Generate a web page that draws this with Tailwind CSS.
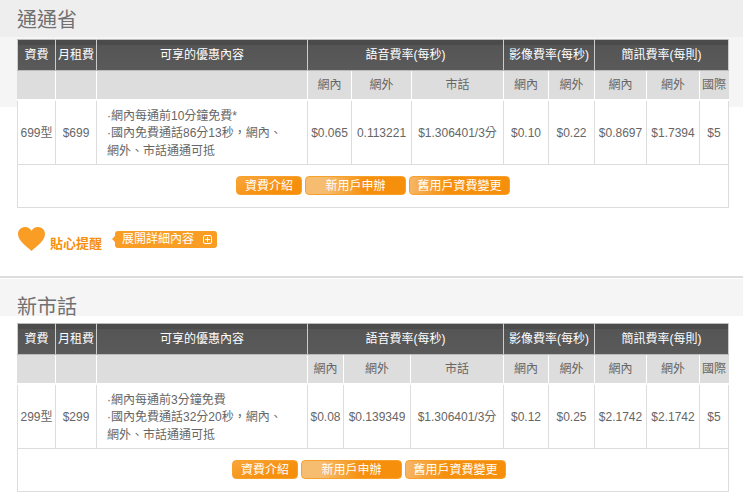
<!doctype html>
<html lang="zh-Hant">
    <head>
        <meta charset="UTF-8">
        <script src="https://cdn.jsdelivr.net/npm/@tailwindcss/browser@4"></script>
        <title>費率</title>
    </head>

    <body class="bg-white overflow-hidden font-['Liberation_Sans','Noto_Sans_CJK_TC',sans-serif] text-[12px] text-[#666]">

        <!-- 通通省 -->
        <section class="h-[276px] px-[17px] bg-[linear-gradient(#eeeeee_37px,#f5f5f5_37px,#f5f5f5_107px,#ffffff_107px)]">
            <h2 class="h-[39px] pt-[6px] text-[20px] leading-[28px] text-[#707070]">通通省</h2>

            <div class="w-[712px] border border-[#ddd] border-t-0">
                <table class="w-[711px] -ml-px table-fixed border-collapse text-center">
                    <colgroup>
                        <col class="w-[38px]"><col class="w-[41px]"><col class="w-[211px]"><col class="w-[44px]"><col class="w-[60px]"><col class="w-[92px]"><col class="w-[45px]"><col class="w-[46px]"><col class="w-[52px]"><col class="w-[53px]"><col class="w-[29px]">
                    </colgroup>
                    <tr class="h-[31px] text-white bg-[linear-gradient(#4b4b4b,#4b4b4b_5px,#555_5px,#5a5a5a)]">
                        <th class="font-normal border-t border-t-[#bbb] border-b border-b-[#bbb] border-r border-r-[#ccc] border-l border-l-[#ccc]">資費</th>
                        <th class="font-normal border-t border-t-[#bbb] border-b border-b-[#bbb] border-r border-r-[#ccc]">月租費</th>
                        <th class="font-normal border-t border-t-[#bbb] border-b border-b-[#bbb] border-r border-r-[#ccc]">可享的優惠內容</th>
                        <th colspan="3" class="font-normal border-t border-t-[#bbb] border-b border-b-[#bbb] border-r border-r-[#ccc]">語音費率(每秒)</th>
                        <th colspan="2" class="font-normal border-t border-t-[#bbb] border-b border-b-[#bbb] border-r border-r-[#ccc]">影像費率(每秒)</th>
                        <th colspan="3" class="font-normal border-t border-t-[#bbb] border-b border-b-[#bbb] border-r border-r-[#ccc]">簡訊費率(每則)</th>
                    </tr>
                    <tr class="h-[29px] bg-[#ddd] border-b-2 border-b-white">
                        <td class="border-r border-r-white"></td>
                        <td class="border-r border-r-white"></td>
                        <td class="border-r border-r-white"></td>
                        <td class="border-r border-r-white">網內</td>
                        <td class="border-r border-r-white">網外</td>
                        <td class="border-r border-r-white">市話</td>
                        <td class="border-r border-r-white">網內</td>
                        <td class="border-r border-r-white">網外</td>
                        <td class="border-r border-r-white">網內</td>
                        <td class="border-r border-r-white">網外</td>
                        <td class="border-r border-r-[#ddd]">國際</td>
                    </tr>
                    <tr class="h-[65px] border-b border-b-[#ddd] bg-white">
                        <td class="pt-px border-x border-x-[#ddd] whitespace-nowrap">699型</td>
                        <td class="pt-px border-r border-r-[#ddd]">$699</td>
                        <td class="pt-[3px] border-r border-r-[#ddd] pl-[10px] pr-[20px] text-left leading-[17.5px]">·網內每通前10分鐘免費*<br>·國內免費通話86分13秒，網內、網外、市話通通可抵</td>
                        <td class="pt-px border-r border-r-[#ddd]">$0.065</td>
                        <td class="pt-px border-r border-r-[#ddd]">0.113221</td>
                        <td class="pt-px border-r border-r-[#ddd] whitespace-nowrap">$1.306401/3分</td>
                        <td class="pt-px border-r border-r-[#ddd]">$0.10</td>
                        <td class="pt-px border-r border-r-[#ddd]">$0.22</td>
                        <td class="pt-px border-r border-r-[#ddd]">$0.8697</td>
                        <td class="pt-px border-r border-r-[#ddd]">$1.7394</td>
                        <td class="pt-px border-r border-r-[#ddd]">$5</td>
                    </tr>
                </table>
                <div class="h-[42px] pt-[11px] pl-[218px] flex gap-[3px] text-white text-center leading-[18px]">
                    <div class="w-[66px] h-[19px] rounded-[4px] border border-[#f7a02c] bg-[linear-gradient(160deg,#f9a63c,#f68f0c_70%)]">資費介紹</div>
                    <div class="w-[101px] h-[19px] rounded-[4px] border border-[#f7a02c] bg-[linear-gradient(90deg,#f6bd70_20%,#f68f0c_60%)]">新用戶申辦</div>
                    <div class="w-[101px] h-[19px] rounded-[4px] border border-[#f7a02c] bg-[linear-gradient(100deg,#f7b769,#f68f0c_40%)]">舊用戶資費變更</div>
                </div>
            </div>

            <div class="mt-[19px] flex items-start">
                <svg class="w-[27px] h-[24px] ml-px" viewBox="0 0 27 24"><path fill="#f99d25" d="M13.5 24C9 19.5 0 14 0 7 0 3 3 0 7 0c3 0 5.300 1.500 6.500 4C14.700 1.500 17 0 20 0c4 0 7 3 7 7 0 7-9 12.500-13.500 17z"/></svg>
                <span class="ml-[5px] mt-[9px] text-[13px] font-bold leading-[16px] text-[#f78f0f]">貼心提醒</span>
                <div class="relative ml-[13px] mt-[4px] w-[102px] h-[17px] rounded-[3px] bg-[#f99d25] text-white leading-[17px] pl-[7px]">
                    <span class="absolute -left-[3px] top-[5px] w-0 h-0 border-y-[3px] border-y-transparent border-r-[3px] border-r-[#f99d25]"></span>
                    展開詳細內容
                    <svg class="absolute right-[5px] top-[4px] w-[9px] h-[9px]" viewBox="0 0 9 9" fill="none" stroke="#fff"><rect x=".5" y=".5" width="8" height="8" rx="1.500"/><path d="M2 4.500h5M4.500 2v5"/></svg>
                </div>
            </div>
        </section>

        <!-- 新市話 -->
        <section class="h-[221px] px-[17px] border-t-2 border-t-[#ddd] bg-[linear-gradient(#ffffff_1px,#f5f5f5_1px,#f5f5f5_38px,#ffffff_38px)]">
            <h2 class="h-[45px] pt-[15px] text-[20px] leading-[28px] text-[#707070]">新市話</h2>

            <div class="w-[712px] border border-[#ddd] border-t-0">
                <table class="w-[711px] -ml-px table-fixed border-collapse text-center">
                    <colgroup>
                        <col class="w-[38px]"><col class="w-[41px]"><col class="w-[211px]"><col class="w-[36px]"><col class="w-[67px]"><col class="w-[93px]"><col class="w-[45px]"><col class="w-[46px]"><col class="w-[52px]"><col class="w-[53px]"><col class="w-[29px]">
                    </colgroup>
                    <tr class="h-[31px] text-white bg-[linear-gradient(#4b4b4b,#4b4b4b_5px,#555_5px,#5a5a5a)]">
                        <th class="font-normal border-t border-t-[#bbb] border-b border-b-[#bbb] border-r border-r-[#ccc] border-l border-l-[#ccc]">資費</th>
                        <th class="font-normal border-t border-t-[#bbb] border-b border-b-[#bbb] border-r border-r-[#ccc]">月租費</th>
                        <th class="font-normal border-t border-t-[#bbb] border-b border-b-[#bbb] border-r border-r-[#ccc]">可享的優惠內容</th>
                        <th colspan="3" class="font-normal border-t border-t-[#bbb] border-b border-b-[#bbb] border-r border-r-[#ccc]">語音費率(每秒)</th>
                        <th colspan="2" class="font-normal border-t border-t-[#bbb] border-b border-b-[#bbb] border-r border-r-[#ccc]">影像費率(每秒)</th>
                        <th colspan="3" class="font-normal border-t border-t-[#bbb] border-b border-b-[#bbb] border-r border-r-[#ccc]">簡訊費率(每則)</th>
                    </tr>
                    <tr class="h-[29px] bg-[#ddd] border-b-2 border-b-white">
                        <td class="border-r border-r-white"></td>
                        <td class="border-r border-r-white"></td>
                        <td class="border-r border-r-white"></td>
                        <td class="border-r border-r-white">網內</td>
                        <td class="border-r border-r-white">網外</td>
                        <td class="border-r border-r-white">市話</td>
                        <td class="border-r border-r-white">網內</td>
                        <td class="border-r border-r-white">網外</td>
                        <td class="border-r border-r-white">網內</td>
                        <td class="border-r border-r-white">網外</td>
                        <td class="border-r border-r-[#ddd]">國際</td>
                    </tr>
                    <tr class="h-[65px] border-b border-b-[#ddd] bg-white">
                        <td class="pt-px border-x border-x-[#ddd] whitespace-nowrap">299型</td>
                        <td class="pt-px border-r border-r-[#ddd]">$299</td>
                        <td class="pt-[3px] border-r border-r-[#ddd] pl-[10px] pr-[20px] text-left leading-[17.5px]">·網內每通前3分鐘免費<br>·國內免費通話32分20秒，網內、網外、市話通通可抵</td>
                        <td class="pt-px border-r border-r-[#ddd]">$0.08</td>
                        <td class="pt-px border-r border-r-[#ddd]">$0.139349</td>
                        <td class="pt-px border-r border-r-[#ddd] whitespace-nowrap">$1.306401/3分</td>
                        <td class="pt-px border-r border-r-[#ddd]">$0.12</td>
                        <td class="pt-px border-r border-r-[#ddd]">$0.25</td>
                        <td class="pt-px border-r border-r-[#ddd]">$2.1742</td>
                        <td class="pt-px border-r border-r-[#ddd]">$2.1742</td>
                        <td class="pt-px border-r border-r-[#ddd]">$5</td>
                    </tr>
                </table>
                <div class="h-[42px] pt-[11px] pl-[214px] flex gap-[3px] text-white text-center leading-[18px]">
                    <div class="w-[66px] h-[19px] rounded-[4px] border border-[#f7a02c] bg-[linear-gradient(160deg,#f9a63c,#f68f0c_70%)]">資費介紹</div>
                    <div class="w-[101px] h-[19px] rounded-[4px] border border-[#f7a02c] bg-[linear-gradient(90deg,#f6bd70_20%,#f68f0c_60%)]">新用戶申辦</div>
                    <div class="w-[101px] h-[19px] rounded-[4px] border border-[#f7a02c] bg-[linear-gradient(100deg,#f7b769,#f68f0c_40%)]">舊用戶資費變更</div>
                </div>
            </div>
        </section>
    </body>
</html>
